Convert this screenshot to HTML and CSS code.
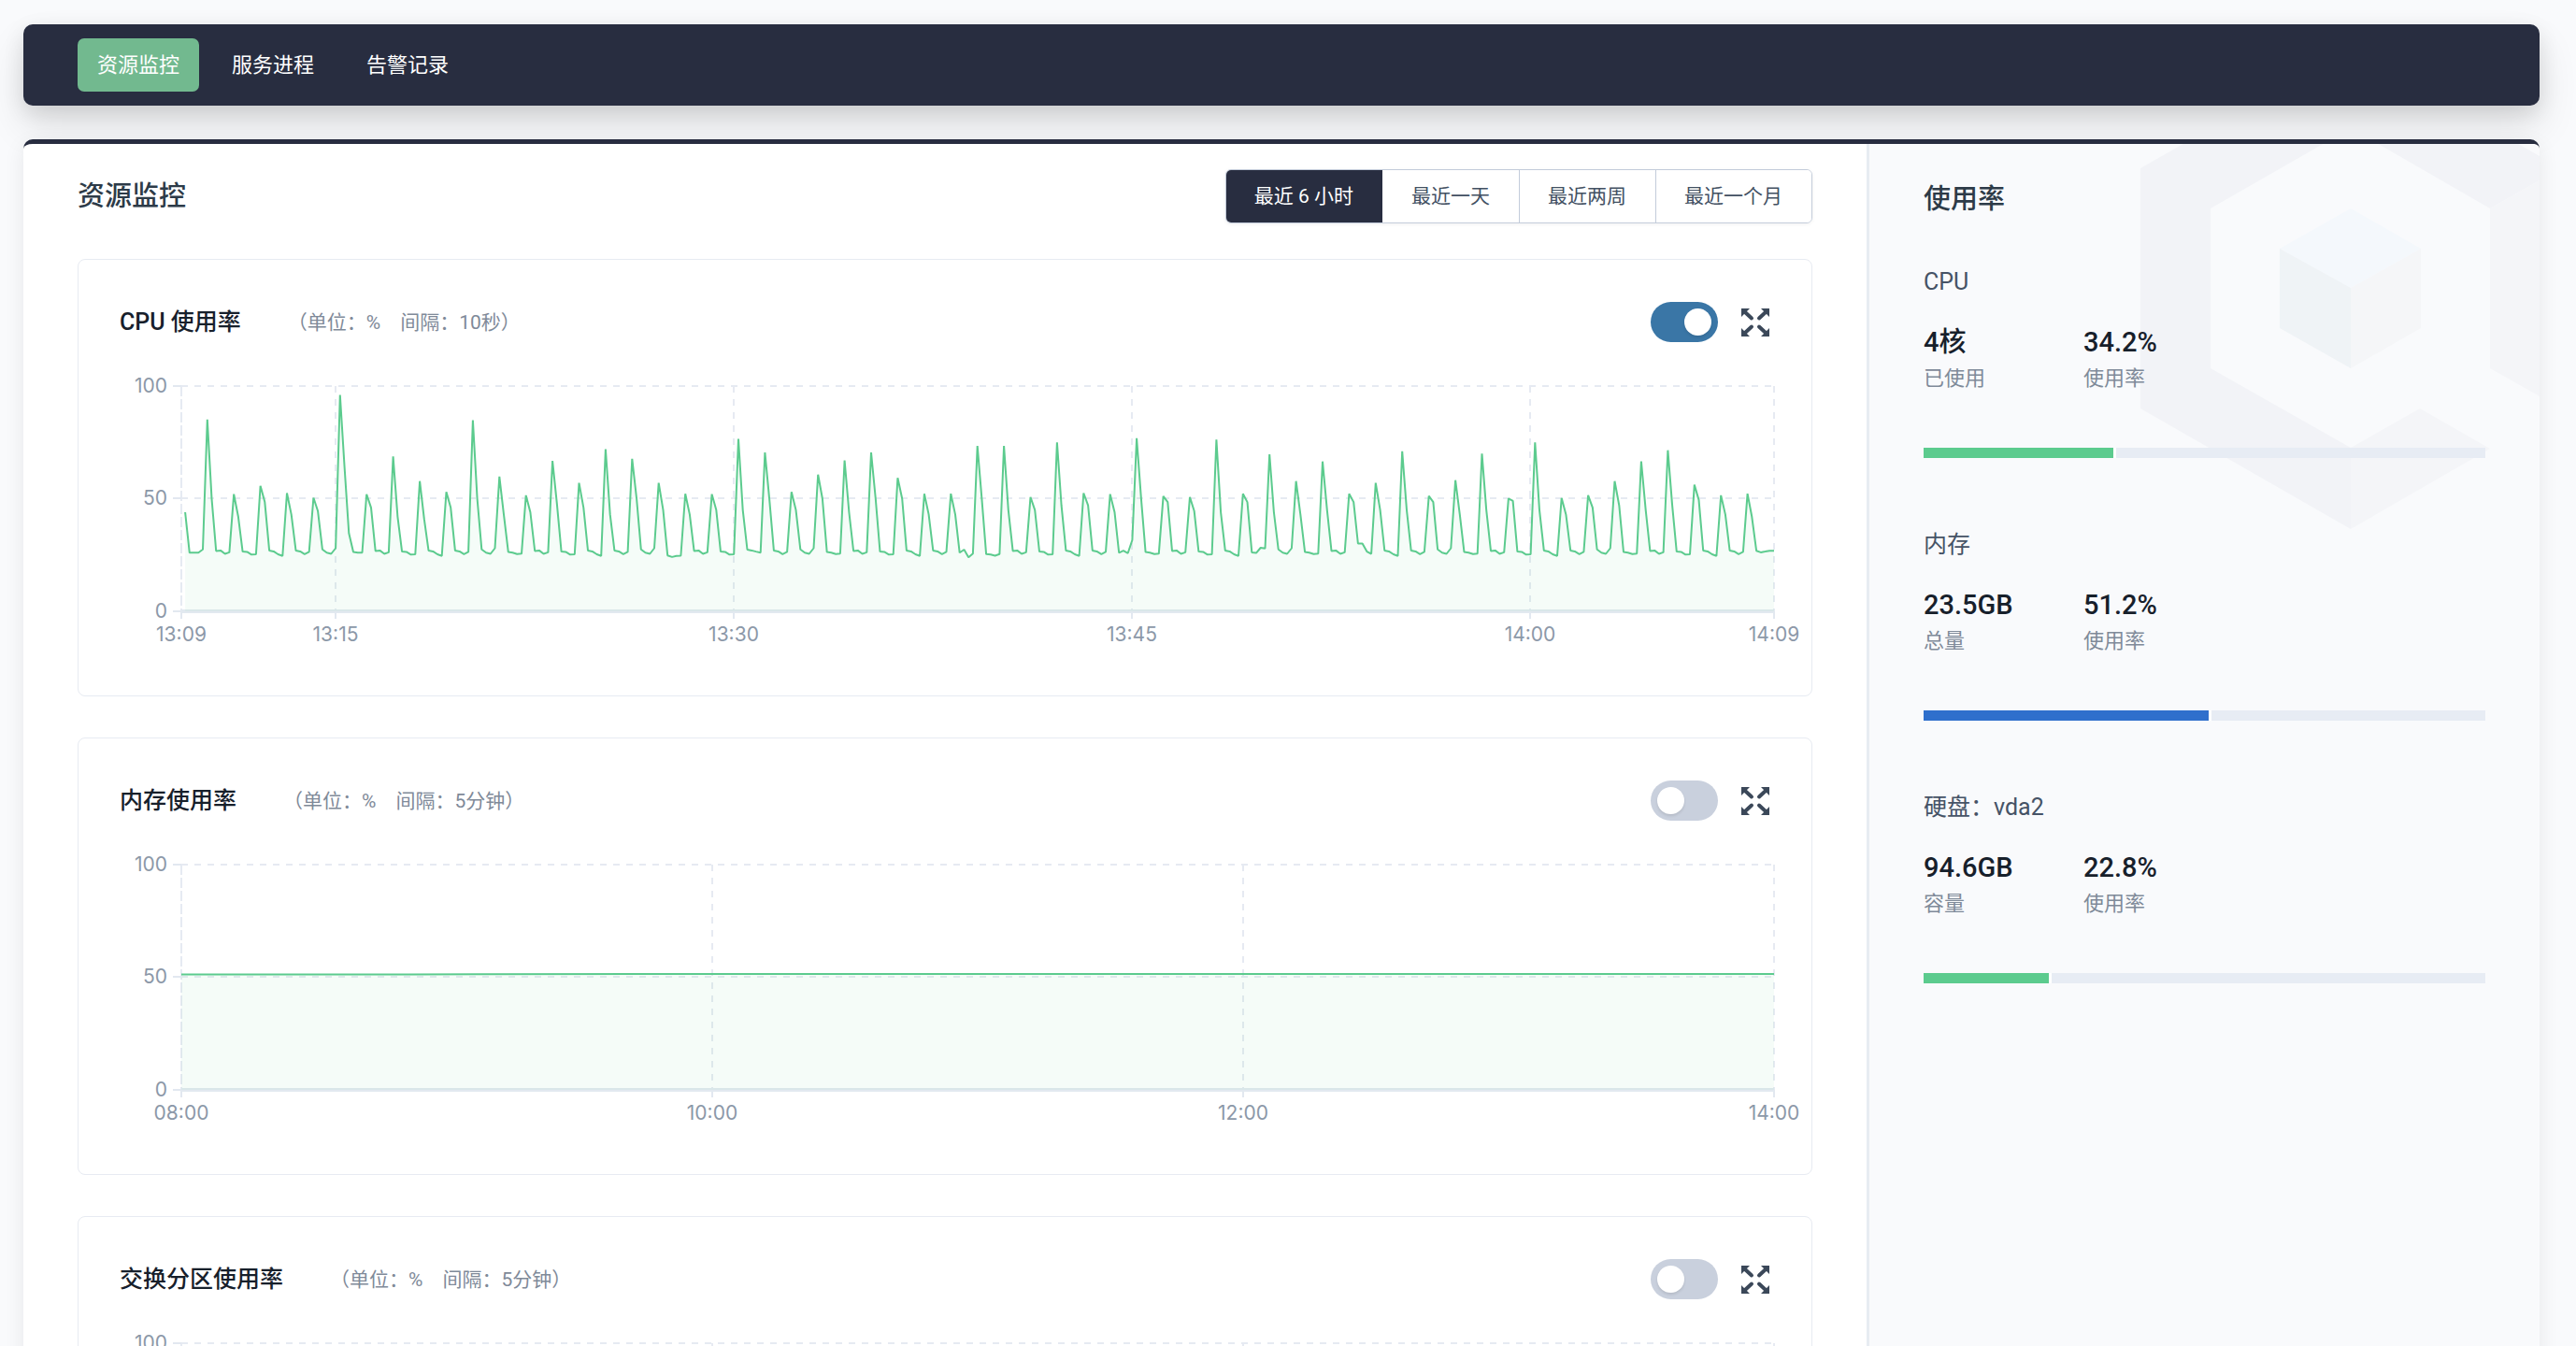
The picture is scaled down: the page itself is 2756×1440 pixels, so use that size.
FILE: index.html
```html
<!DOCTYPE html>
<html lang="zh-CN">
<head>
<meta charset="utf-8">
<meta name="viewport" content="width=device-width, initial-scale=1">
<title>资源监控</title>
<link rel="stylesheet" href="styles.css">
</head>
<body>
<svg class="defs" aria-hidden="true">
  <symbol id="icon-expand" viewBox="0 0 30 30">
    <path d="M0 0h9L6.500 2.500 2.500 6.500 0 9zM30 0h-9l2.500 2.500 4 4L30 9zM0 30h9l-2.500-2.500-4-4L0 21zM30 30h-9l2.500-2.500 4-4L30 21z"/>
    <path fill="none" stroke="#3b4859" stroke-width="4" stroke-linecap="round" d="M4 4l7 6.500M26 4l-7 6.500M4 26l7-6.500M26 26l-7-6.500"/>
  </symbol>
</svg>
<div class="page">
  <nav class="nav">
    <a class="nav-link active" href="#monitor">资源监控</a>
    <a class="nav-link" href="#process">服务进程</a>
    <a class="nav-link" href="#alerts">告警记录</a>
  </nav>

  <div class="panel">
    <main class="content">
      <header class="content-head">
        <h1 class="heading">资源监控</h1>
        <div class="range">
          <button type="button" class="range-btn active">最近 6 小时</button>
          <button type="button" class="range-btn">最近一天</button>
          <button type="button" class="range-btn">最近两周</button>
          <button type="button" class="range-btn">最近一个月</button>
        </div>
      </header>

      <section class="card">
        <div class="card-head">
          <h2 class="card-title">CPU 使用率</h2>
          <span class="card-note">（单位：%　间隔：10秒）</span>
          <input class="toggle" type="checkbox" aria-label="CPU 使用率" checked>
          <button type="button" class="expand" aria-label="全屏"><svg><use href="#icon-expand"/></svg></button>
        </div>
        <svg class="chart" data-chart="cpu"></svg>
      </section>

      <section class="card">
        <div class="card-head">
          <h2 class="card-title">内存使用率</h2>
          <span class="card-note">（单位：%　间隔：5分钟）</span>
          <input class="toggle" type="checkbox" aria-label="内存使用率">
          <button type="button" class="expand" aria-label="全屏"><svg><use href="#icon-expand"/></svg></button>
        </div>
        <svg class="chart" data-chart="memory"></svg>
      </section>

      <section class="card">
        <div class="card-head">
          <h2 class="card-title">交换分区使用率</h2>
          <span class="card-note">（单位：%　间隔：5分钟）</span>
          <input class="toggle" type="checkbox" aria-label="交换分区使用率">
          <button type="button" class="expand" aria-label="全屏"><svg><use href="#icon-expand"/></svg></button>
        </div>
        <svg class="chart" data-chart="swap"></svg>
      </section>
    </main>

    <aside class="side">
      <svg class="side-logo" viewBox="0 0 450 514" aria-hidden="true">
        <path fill="#f2f3f7" d="M225 0 450 128 374 171 225 85 75 171V342L225 427V514L0 385V128z"/>
        <path fill="#f4f5f8" d="M374 171 450 128V385L374 342zM225 427 299 385 374 428 225 514z"/>
        <path fill="#f4f8fc" d="M225 171 300 214 225 256 149 214z"/>
        <path fill="#eff3f6" d="M149 214 225 256V342L149 299z"/>
        <path fill="#f5f6f8" d="M300 214 225 256V342L300 299z"/>
      </svg>
      <h2 class="heading">使用率</h2>

      <section class="usage">
        <h3 class="usage-name">CPU</h3>
        <dl class="stats">
          <div class="stat"><dd>4核</dd><dt>已使用</dt></div>
          <div class="stat"><dd>34.2%</dd><dt>使用率</dt></div>
        </dl>
        <div class="bar"><span class="bar-fill" style="width:34.2%"></span></div>
      </section>

      <section class="usage">
        <h3 class="usage-name">内存</h3>
        <dl class="stats">
          <div class="stat"><dd>23.5GB</dd><dt>总量</dt></div>
          <div class="stat"><dd>51.2%</dd><dt>使用率</dt></div>
        </dl>
        <div class="bar"><span class="bar-fill blue" style="width:51.2%"></span></div>
      </section>

      <section class="usage">
        <h3 class="usage-name">硬盘：vda2</h3>
        <dl class="stats">
          <div class="stat"><dd>94.6GB</dd><dt>容量</dt></div>
          <div class="stat"><dd>22.8%</dd><dt>使用率</dt></div>
        </dl>
        <div class="bar"><span class="bar-fill" style="width:22.8%"></span></div>
      </section>
    </aside>
  </div>
</div>
<script src="charts.js"></script>
</body>
</html>
```

FILE: styles.css
```css
* {
  box-sizing: border-box;
}

body {
  margin: 0;
  background: #f9fafc;
  color: #1a202c;
  font-family: Roboto, "Noto Sans CJK SC", sans-serif;
  font-size: 22px;
  line-height: 34px;
}

h1, h2, h3, dl, dd {
  margin: 0;
  font-weight: 400;
}

button {
  font: inherit;
  cursor: pointer;
}

.defs {
  display: none;
}

.page {
  height: 100vh;
  padding: 26px 39px 26px 25px;
  overflow: auto;
  scrollbar-width: none;
}

/* top navigation */

.nav {
  display: flex;
  gap: 14px;
  padding: 15px 58px;
  border-radius: 10px;
  background: #282d40;
  box-shadow: 0 22px 43px rgba(0, 0, 0, .11), 0 7px 22px rgba(0, 0, 0, .1);
}

.nav-link {
  padding: 0 21px;
  border-radius: 7px;
  color: #fff;
  line-height: 57px;
  text-decoration: none;
}

.nav-link.active {
  background: #72b98f;
}

/* main panel */

.panel {
  position: relative;
  display: flex;
  margin-top: 36px;
  border-top: 5px solid #282d40;
  border-radius: 10px;
  background: #fff;
  box-shadow: 0 6px 22px rgba(0, 0, 0, .08);
}

.content {
  flex: 1;
  min-width: 0;
  padding: 27px 58px 58px;
}

.content-head {
  display: flex;
  align-items: center;
  justify-content: space-between;
  margin-bottom: 38px;
}

.heading {
  color: #2d3b48;
  font-size: 29px;
  font-weight: 500;
  line-height: 44px;
}

.range {
  display: flex;
  overflow: hidden;
  border: 1px solid #c3ccda;
  border-radius: 6px;
  box-shadow: 0 1px 4px rgba(0, 0, 0, .06);
}

.range-btn {
  padding: 0 31px 0 30px;
  border: 0;
  border-left: 1px solid #c3ccda;
  background: #fff;
  color: #425062;
  font-size: 21px;
  line-height: 56px;
}

.range-btn.active {
  margin: -1px 0 -1px -1px;
  border-color: #282d40;
  background: #282d40;
  color: #fff;
  line-height: 58px;
}

.range-btn.active + .range-btn {
  border-left-color: #fff;
}

/* chart cards */

.card {
  border: 1px solid #e7ebf2;
  border-radius: 8px;
}

.card + .card {
  margin-top: 44px;
}

.card-head {
  display: flex;
  align-items: center;
  padding: 45px 45px 22px 44px;
}

.card-title {
  color: #17202b;
  font-size: 25px;
  font-weight: 500;
}

.card-note {
  margin-left: 50px;
  color: #7f8a99;
  font-size: 21px;
}

.toggle {
  display: flex;
  align-items: center;
  width: 72px;
  height: 43px;
  margin: 0 25px 0 auto;
  padding: 0 7px;
  border-radius: 22px;
  background: #c9d0dd;
  appearance: none;
  cursor: pointer;
}

.toggle::before {
  width: 29px;
  height: 29px;
  border-radius: 50%;
  background: #fff;
  box-shadow: 0 2px 3px rgba(0, 0, 0, .1);
  content: "";
}

.toggle:checked {
  justify-content: flex-end;
  background: #3a76a6;
}

.expand {
  display: flex;
  padding: 0;
  border: 0;
  background: none;
}

.expand svg {
  width: 30px;
  height: 30px;
  fill: #3b4859;
}

.chart {
  display: block;
  width: 100%;
  height: 356px;
}

.grid {
  fill: none;
  stroke: #e6eaf2;
  stroke-width: 2;
  stroke-dasharray: 7 7;
}

.grid.edge {
  stroke-dasharray: 11 3;
}

.tick {
  stroke: #e2e8f0;
  stroke-width: 2;
}

.axis {
  stroke: #e2e9f0;
  stroke-width: 4;
}

.area {
  fill: rgba(88, 203, 140, .06);
}

.line {
  fill: none;
  stroke: #5ccb8e;
  stroke-width: 2;
  stroke-linejoin: bevel;
}

.label {
  fill: #8c98a8;
  font-family: Inter, sans-serif;
  font-size: 21px;
}

/* usage sidebar */

.side {
  position: relative;
  flex: 0 0 720px;
  padding: 37px 58px 58px;
  overflow: hidden;
  border-left: 3px solid #e7ecf2;
  border-top-right-radius: 6px;
  background: #f9fafc;
}

.side-logo {
  position: absolute;
  top: -102px;
  right: -23px;
  width: 450px;
  height: 514px;
}

.side .heading {
  position: relative;
  margin-bottom: 49px;
}

.usage {
  position: relative;
  margin-bottom: 75px;
}

.usage-name {
  color: #465366;
  font-size: 25px;
  line-height: 36px;
}

.stats {
  display: flex;
  margin: 26px 0 55px;
}

.stat {
  flex: 0 0 171px;
}

.stat dd {
  color: #17202b;
  font-size: 29px;
  font-weight: 500;
  line-height: 40px;
}

.stat dt {
  color: #7f8a99;
  line-height: 38px;
}

.bar {
  display: flex;
  height: 11px;
  background: #e7ecf4;
}

.bar-fill {
  border-right: 3px solid #fff;
  background: #5ccb8e;
}

.bar-fill.blue {
  background: #2f6fcc;
}
```

FILE: charts.js
```js
const NS = "http://www.w3.org/2000/svg";

// CPU load repeats every minute: a peak, its shoulder, then four idle samples.
const peaks = [
  85.2, 52, 55.7, 52.5, 50.4, 96, 52, 68.7, 57.8, 53, 84.8, 59.8, 51.5, 66.8, 57, 72, 67.7, 57, 52.2, 52,
  76.5, 70.5, 53, 60.7, 67, 70.5, 59.2, 52.2, 52.2, 73.4, 73.4, 50.7, 75, 52.5, 52, 76.9, 51.1, 50.7, 76.2, 52.2,
  69.7, 57.8, 66.5, 52.2, 57, 71, 51.2, 58.2, 70, 50.1, 75, 50.3, 51.5, 57.8, 66.6, 71.5, 56.2, 51.5, 52.2
];
const shoulders = [
  50, 42, 48.5, 43, 44.5, 64, 46, 42, 41, 46, 50, 43, 44, 48, 46, 43, 50, 45, 43, 45,
  45, 50, 45, 50, 44, 50, 50, 43, 43, 50, 45, 45, 47, 47, 44, 50, 48.5, 44.5, 44, 48.5,
  44, 43, 45, 48.5, 45, 45, 48.5, 43, 45, 49, 45, 43, 46, 47, 45, 47, 49.5, 43, 42
];
const idle = [
  [26.8, 27, 25.5, 26.2], [26.5, 26.4, 25.2, 25.3], [27, 26.6, 25.3, 24.6],
  [27, 26.6, 25.4, 26.4], [27.5, 26, 25.5, 28], [26.3, 26, 25.4, 25.6]
];
const idleAt = {
  5: [34.6, 26.3, 26, 26], 17: [24.8, 24.1, 24.6, 24.7], 20: [27.4, 27, 26.5, 26],
  28: [26, 27.4, 24, 25.6], 29: [25.4, 25.2, 24.7, 25.4], 34: [26, 26.9, 25.8, 31.6],
  39: [26.2, 25.9, 28.2, 27.9], 43: [30.1, 30.1, 26.5, 25.5], 58: [26.9, 26.2, 26.5, 26.9]
};

const cpu = [44, 26, 26, 26, 27.5];
peaks.forEach((peak, i) => cpu.push(peak, shoulders[i], ...(idleAt[i] || idle[i % idle.length])));
cpu.push(26.9);

const hours = [["08:00", 0], ["10:00", 1 / 3], ["12:00", 2 / 3], ["14:00", 1]];
const charts = {
  cpu: {
    values: cpu,
    start: 0.0024,
    ticks: [["13:09", 0], ["13:15", 0.097], ["13:30", 0.347], ["13:45", 0.597], ["14:00", 0.847], ["14:09", 1]]
  },
  memory: { values: [51.3, 51.3, 51.4, 51.4, 51.5, 51.5, 51.4, 51.4], start: 0, ticks: hours },
  swap: { values: [2, 2, 2, 2], start: 0, ticks: hours }
};

const area = { left: 110, right: 40, top: 25, height: 241 };

function add(svg, tag, attrs, text) {
  const node = document.createElementNS(NS, tag);
  Object.entries(attrs).forEach(([key, value]) => node.setAttribute(key, value));
  if (text) node.textContent = text;
  svg.append(node);
}

function draw(svg) {
  const { values, start, ticks } = charts[svg.dataset.chart];
  const width = svg.clientWidth - area.left - area.right;
  const right = area.left + width;
  const bottom = area.top + area.height;
  const px = part => area.left + Math.round(part * width);
  const py = value => bottom - value * area.height / 100;
  svg.replaceChildren();

  [100, 50].forEach(value => {
    const y = Math.floor(py(value));
    add(svg, "path", { class: "grid", d: `M${area.left} ${y}H${right}` });
  });
  ticks.forEach(([name, part], i) => {
    add(svg, "path", { class: i ? "grid" : "grid edge", d: `M${px(part)} ${area.top}V${bottom}` });
    add(svg, "path", { class: "tick", d: `M${px(part)} ${bottom}v8` });
    add(svg, "text", { class: "label", x: px(part), y: bottom + 32, "text-anchor": "middle" }, name);
  });
  [100, 50, 0].forEach(value => {
    const y = Math.floor(py(value));
    add(svg, "path", { class: "tick", d: `M${area.left - 9} ${y}h9` });
    add(svg, "text", { class: "label", x: area.left - 15, y: y + 7, "text-anchor": "end" }, String(value));
  });
  add(svg, "path", { class: "axis", d: `M${area.left} ${bottom}H${right}` });

  const from = area.left + start * width;
  const step = (right - from) / (values.length - 1);
  const points = values.map((value, i) => `${(from + i * step).toFixed(1)} ${py(value).toFixed(1)}`).join("L");
  add(svg, "path", { class: "area", d: `M${from} ${bottom}L${points}V${bottom}z` });
  add(svg, "path", { class: "line", d: `M${points}` });
}

function drawAll() {
  document.querySelectorAll(".chart").forEach(draw);
}

drawAll();
window.addEventListener("resize", drawAll);
```
